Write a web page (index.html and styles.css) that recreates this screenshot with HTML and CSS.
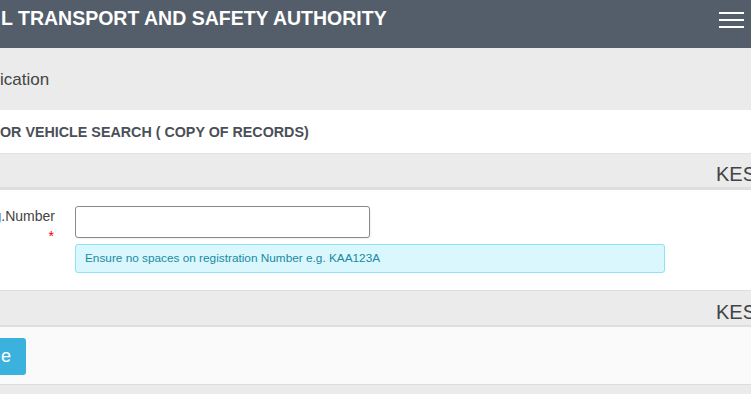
FILE: index.html
```html
<!DOCTYPE html>
<html lang="en">
<head>
<meta charset="utf-8">
<title>Motor Vehicle Search</title>
<link rel="stylesheet" href="styles.css">
</head>
<body>
<header class="topbar">
  <div class="brand">L TRANSPORT AND SAFETY AUTHORITY</div>
  <button class="burger" aria-label="Menu"><span></span><span></span><span></span></button>
</header>
<div class="crumb">ication</div>
<section class="panel-title">OR VEHICLE SEARCH ( COPY OF RECORDS)</section>
<div class="strip strip-top"><span class="amount">KES</span></div>
<div class="form-area">
  <div class="form-row">
    <label class="label" for="reg"><span class="label-text">g.Number</span><span class="req">*</span></label>
    <div class="field">
      <input id="reg" class="input" type="text">
      <div class="hint">Ensure no spaces on registration Number e.g. KAA123A</div>
    </div>
  </div>
</div>
<div class="strip strip-bottom"><span class="amount">KES</span></div>
<div class="actions"><button class="btn">e</button></div>
<div class="foot"></div>
</body>
</html>
```
FILE: styles.css
```css
html, body {
  margin: 0;
  padding: 0;
  overflow: hidden;
  background: #ebebeb;
  font-family: "Liberation Sans", Arial, sans-serif;
  color: #444;
}
.topbar {
  height: 48px;
  background: #545e6a;
  display: flex;
  justify-content: space-between;
  align-items: flex-start;
}
.brand {
  color: #fff;
  font-weight: bold;
  font-size: 19.5px;
  line-height: 20px;
  padding: 8px 0 0 1px;
  white-space: nowrap;
}
.burger {
  margin: 12px 7px 0 0;
  padding: 0;
  border: 0;
  background: transparent;
  display: flex;
  flex-direction: column;
  gap: 5px;
  width: 25px;
}
.burger span {
  display: block;
  width: 25px;
  height: 2px;
  background: #fff;
}
.crumb {
  height: 40px;
  padding-top: 22px;
  font-size: 17px;
  line-height: 20px;
  color: #444;
  box-sizing: content-box;
}
.panel-title {
  background: #fff;
  height: 29px;
  padding-top: 14px;
  font-size: 14.3px;
  line-height: 16px;
  font-weight: bold;
  color: #4a4f58;
  white-space: nowrap;
}
.strip {
  background: #ebebeb;
  display: flex;
  white-space: nowrap;
  font-size: 20px;
  line-height: 20px;
  color: #444;
}
.strip-top {
  border-top: 1px solid #e2e2e2;
  border-bottom: 3px solid #dedede;
  height: 23px;
  padding-top: 10px;
}
.strip-bottom {
  border-top: 1px solid #dedede;
  border-bottom: 2px solid #dedede;
  height: 23px;
  padding-top: 11px;
}
.amount {
  margin-left: 716px;
}
.form-area {
  background: #fff;
  padding: 16px 0 17px;
}
.form-row {
  display: grid;
  grid-template-columns: 55px 590px;
  column-gap: 20px;
}
.label {
  display: flex;
  flex-direction: column;
  align-items: flex-end;
  font-size: 14px;
  line-height: 18px;
  padding-top: 1px;
  color: #444;
  white-space: nowrap;
  min-width: 0;
}
.label-text {
  display: block;
}
.req {
  display: block;
  color: #e00;
  font-size: 14px;
  line-height: 14px;
  padding-top: 4px;
  padding-right: 1px;
}
.field {
  display: flex;
  flex-direction: column;
  gap: 6px;
}
.input {
  width: 295px;
  height: 32px;
  box-sizing: border-box;
  border: 1px solid #8a8a8a;
  border-radius: 3px;
  background: #fff;
  box-shadow: 1px 1px 2px rgba(0,0,0,0.06);
  margin: 0;
}
.hint {
  height: 29px;
  box-sizing: border-box;
  background: #d9f7fc;
  border: 1px solid #8ce3f3;
  border-radius: 3px;
  color: #1a8aa3;
  font-size: 11.8px;
  line-height: 27px;
  padding-left: 9px;
  white-space: nowrap;
}
.actions {
  background: #fafafa;
  border-bottom: 1px solid #dddddd;
  padding-top: 11px;
  box-sizing: content-box;
  height: 46px;
}
.btn {
  height: 37px;
  border: 0;
  border-radius: 0 3px 3px 0;
  background: #3bb1dd;
  color: #fff;
  font-family: "Liberation Sans", Arial, sans-serif;
  font-size: 18px;
  padding: 0 15px 0 1px;
  margin: 0;
  display: block;
}
.foot {
  height: 20px;
}
```
